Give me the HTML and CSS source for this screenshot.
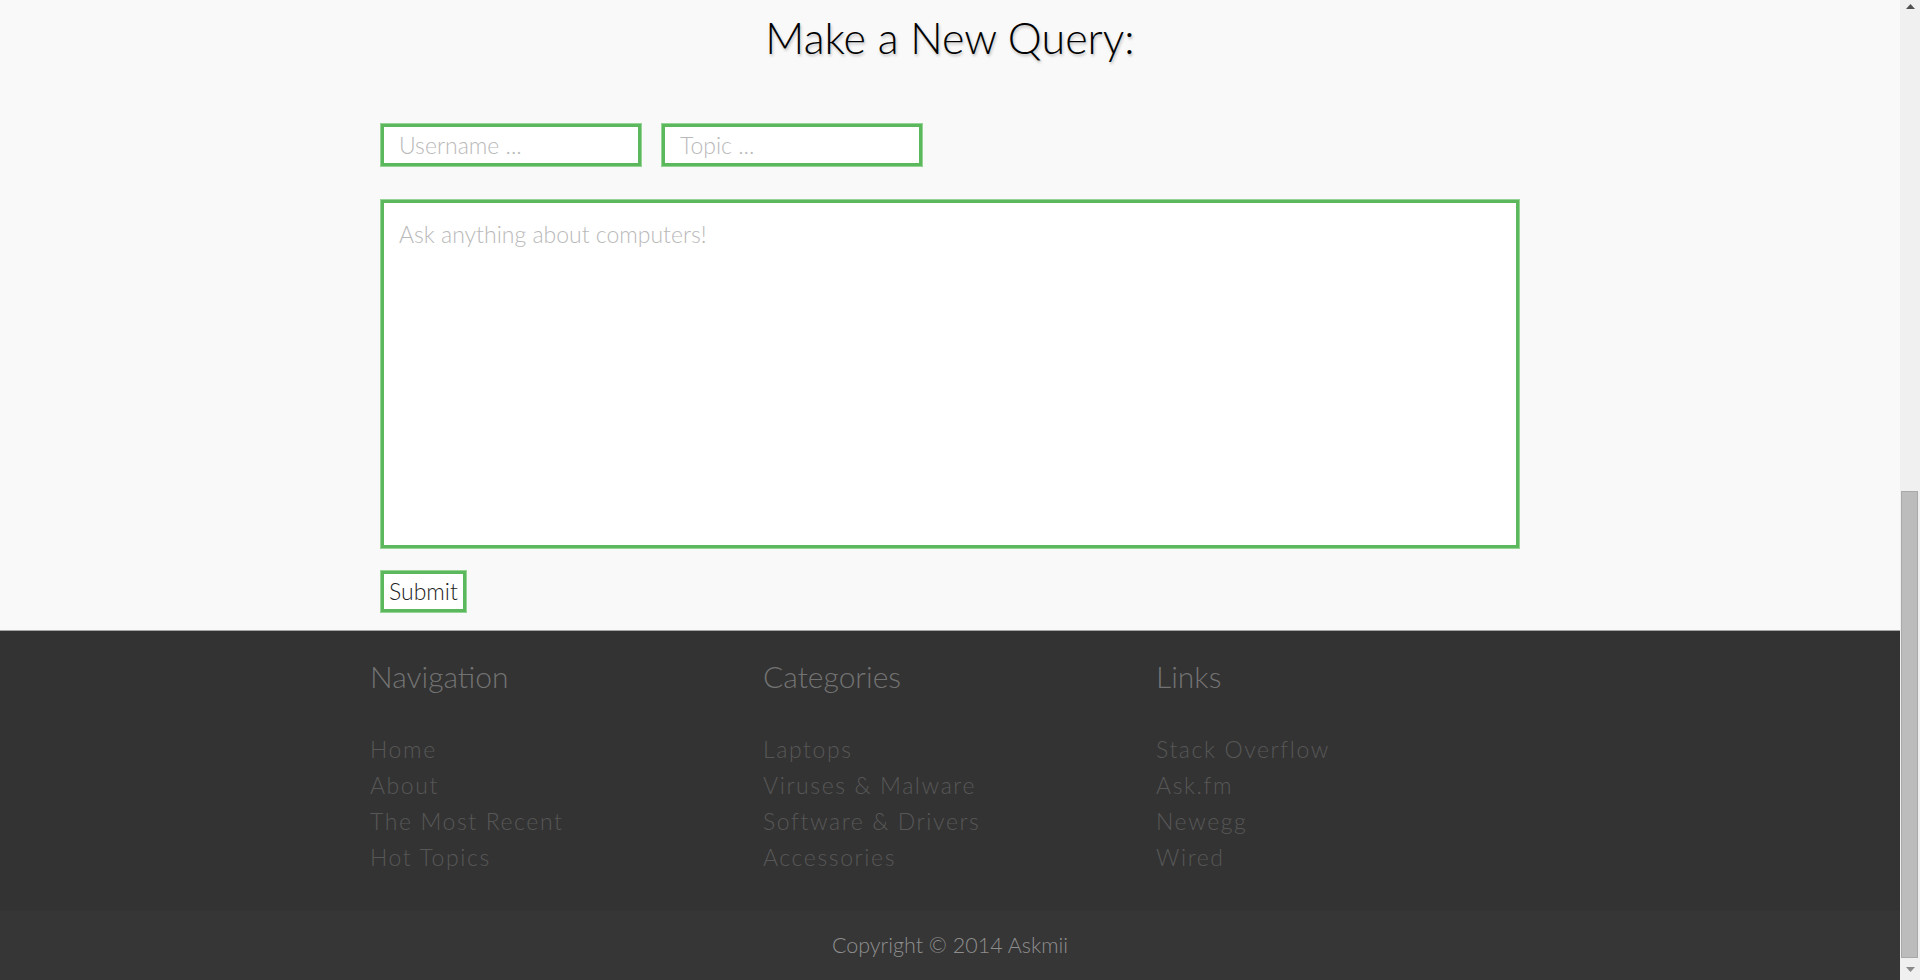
FILE: index.html
```html
<!DOCTYPE html>
<html lang="en">
<head>
<meta charset="utf-8">
<title>Askmii - Make a New Query</title>
<link rel="stylesheet" href="styles.css">
</head>
<body>
<div class="page">
  <main class="query">
    <h1 class="query-title">Make a New Query:</h1>
    <form class="query-form">
      <div class="field-row">
        <input class="field" type="text" placeholder="Username ...">
        <input class="field" type="text" placeholder="Topic ...">
      </div>
      <textarea class="field field-area" placeholder="Ask anything about computers!"></textarea>
      <button class="submit" type="button">Submit</button>
    </form>
  </main>
  <footer class="site-footer">
    <div class="footer-cols">
      <section class="footer-col">
        <h3 class="footer-heading">Navigation</h3>
        <ul class="footer-links">
          <li>Home</li>
          <li>About</li>
          <li>The Most Recent</li>
          <li>Hot Topics</li>
        </ul>
      </section>
      <section class="footer-col">
        <h3 class="footer-heading">Categories</h3>
        <ul class="footer-links">
          <li>Laptops</li>
          <li>Viruses &amp; Malware</li>
          <li>Software &amp; Drivers</li>
          <li>Accessories</li>
        </ul>
      </section>
      <section class="footer-col">
        <h3 class="footer-heading">Links</h3>
        <ul class="footer-links">
          <li>Stack Overflow</li>
          <li>Ask.fm</li>
          <li>Newegg</li>
          <li>Wired</li>
        </ul>
      </section>
    </div>
    <div class="copyright">Copyright © 2014 Askmii</div>
  </footer>
</div>
<div class="scrollbar">
  <div class="sb-btn sb-up"><svg width="9" height="5" viewBox="0 0 9 5"><path d="M0 5 L4.5 0 L9 5 Z" fill="#505050"/></svg></div>
  <div class="sb-track"><div class="sb-thumb"></div></div>
  <div class="sb-btn sb-down"><svg width="9" height="5" viewBox="0 0 9 5"><path d="M0 0 L9 0 L4.5 5 Z" fill="#8a8a8a"/></svg></div>
</div>
</body>
</html>
```
FILE: styles.css
```css
html, body {
  margin: 0;
  padding: 0;
  height: 980px;
  overflow: hidden;
}
body {
  display: flex;
  font-family: Lato, "Liberation Sans", sans-serif;
  font-weight: 300;
  background: #f9f9f9;
}
.page {
  flex: 1;
  display: flex;
  flex-direction: column;
  min-width: 0;
}
.query {
  flex: none;
  height: 630px;
  box-sizing: border-box;
  padding-top: 8px;
  background: #f9f9f9;
}
.query-title {
  margin: 0;
  text-align: center;
  font-size: 43px;
  line-height: 60px;
  font-weight: 300;
  color: #000;
  text-shadow: 1px 2px 3px rgba(0, 0, 0, 0.25);
}
.query-form {
  width: 1138px;
  margin: 56px auto 0;
}
.field-row {
  display: flex;
  gap: 21px;
}
.field {
  box-sizing: border-box;
  width: 260px;
  height: 42px;
  border: 3px solid #5cb85c;
  box-shadow: 0 0 0 1px #95d495;
  background: #fff;
  padding: 0 15px;
  font-family: Lato, "Liberation Sans", sans-serif;
  font-weight: 300;
  font-size: 23px;
  color: #333;
  outline: none;
  border-radius: 0;
}
.field::placeholder {
  color: #b9b9b9;
}
.field-area {
  display: block;
  width: 1138px;
  height: 348px;
  margin-top: 34px;
  padding: 16px 15px;
  line-height: 30px;
  resize: none;
}
.submit {
  display: block;
  box-sizing: border-box;
  height: 41px;
  margin-top: 23px;
  padding: 0 5px;
  border: 3px solid #5cb85c;
  box-shadow: 0 0 0 1px #95d495;
  background: #fff;
  font-family: Lato, "Liberation Sans", sans-serif;
  font-weight: 300;
  font-size: 23px;
  line-height: 35px;
  color: #222;
  border-radius: 0;
}
.site-footer {
  flex: 1;
  display: flex;
  flex-direction: column;
  background: #333333;
  border-top: 1px solid #a6a6a6;
}
.footer-cols {
  width: 1170px;
  margin: 0 auto;
  padding: 25px 0 36px 10px;
  display: grid;
  grid-template-columns: 393px 393px 384px;
}
.footer-heading {
  margin: 0 0 35px;
  font-size: 30px;
  line-height: 40px;
  font-weight: 300;
  color: #727272;
}
.footer-links {
  list-style: none;
  margin: 0;
  padding: 0;
  font-size: 23px;
  line-height: 36px;
  letter-spacing: 1.6px;
  color: #575757;
}
.copyright {
  flex: 1;
  background: #363636;
  text-align: center;
  font-size: 21.5px;
  line-height: 69px;
  color: #8e8e8e;
}
.scrollbar {
  flex: none;
  width: 20px;
  display: flex;
  flex-direction: column;
  background: #f0f0f0;
}
.sb-btn {
  display: flex;
  align-items: center;
  justify-content: center;
}
.sb-up {
  height: 12px;
  padding-bottom: 5px;
}
.sb-down {
  height: 22px;
}
.sb-track {
  flex: 1;
  display: flex;
  flex-direction: column;
  justify-content: flex-end;
}
.sb-thumb {
  box-sizing: border-box;
  height: 467px;
  margin: 0 2px 0 1px;
  background: #bcbcbc;
  border: 1px solid #a9a9a9;
}
```
